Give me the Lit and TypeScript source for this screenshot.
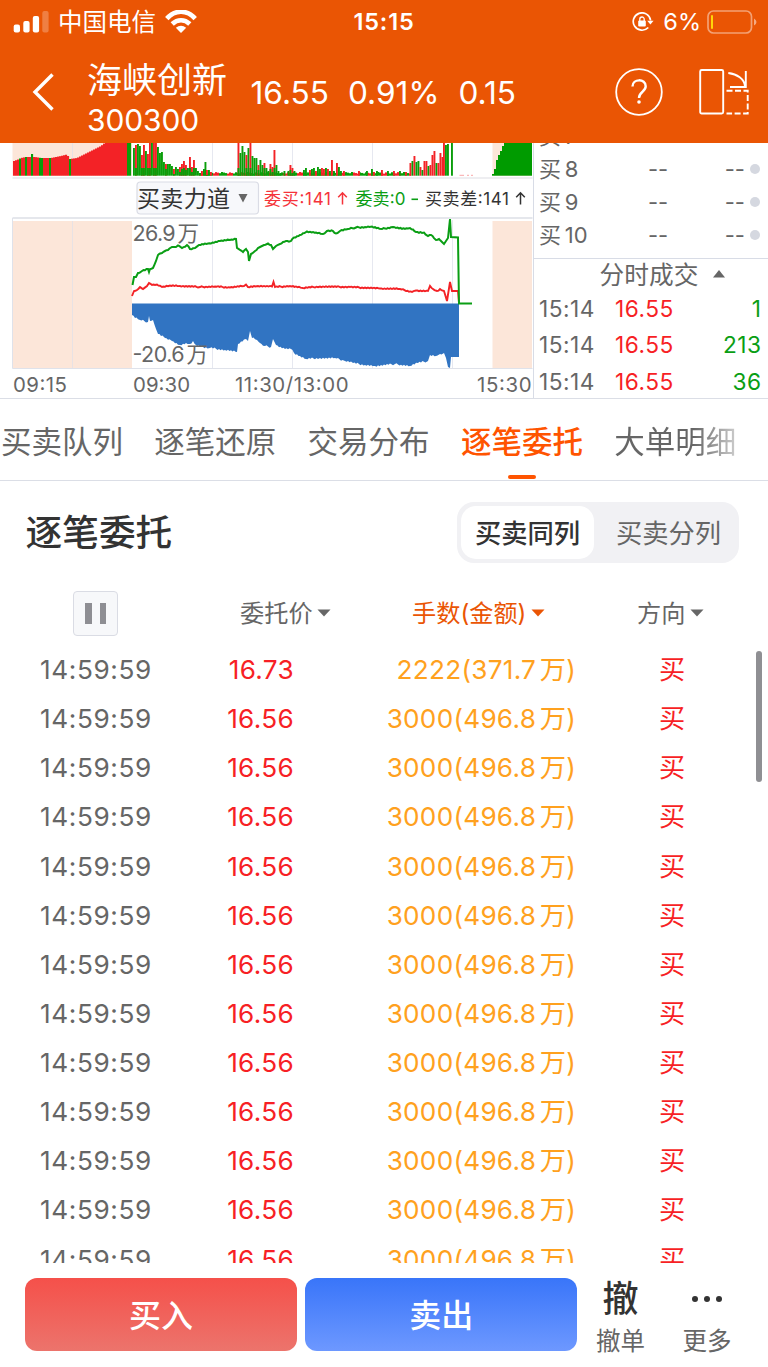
import { LitElement, html, svg, css } from "lit";
import { customElement } from "lit/decorators.js";

type Pt = [number, number];

const GREEN_LINE: Pt[] = [[132.5,285],[134,277],[136,277],[138,273],[142,271],[148,269],[149,272],[150,269],[153,268],[156,261],[158,255],[162,253],[165,251],[168,250],[172,247],[176,247],[178,245.5],[182,248],[187,245],[190,249],[195,248],[199,245],[208,243.5],[220,241],[230,240],[236,239],[237,248],[240,250],[243,252],[246,249],[248,252],[249,261],[251,254],[255,251],[258,248],[260,247],[264,245],[268,243.5],[271,245],[273,249],[276,246],[280,244],[286,241],[291,241],[294,237.5],[300,235],[307,231.5],[316,232.5],[323,234],[327,231],[333,231],[336,233.5],[340,231],[348,229],[356,227.5],[365,227],[372,226.5],[382,229],[393,227],[405,229],[410,228],[416,232],[424,232.5],[428,236],[431,235],[436,240],[439,239],[442,242],[444,244],[448,238],[450,219],[451,237],[458,237.5],[459,303.5],[472,303.5]];
const RED_LINE: Pt[] = [[132,296],[134,291],[137,290],[140,287],[143,289],[147,286],[149,283],[152,285],[157,284.5],[162,287],[170,285.5],[180,286],[200,287],[215,286.5],[230,287.5],[244,286],[246,284.5],[248,287],[258,286],[272,286.5],[273.5,282],[275,287],[290,286],[303,288],[320,286.5],[350,287],[380,288.5],[400,289],[412,292],[416,290.5],[428,291],[430,286],[433,289],[437,291],[440,289],[444,291],[447,301],[450,282],[452,291],[458,291],[459,303]];
const BLUE_EDGE: Pt[] = [[132,315],[135,318],[140,320],[148,322],[149,316],[150,321],[153,320],[156,329],[158,334],[165,338],[172,341],[180,345],[186,343],[190,344],[193,341],[197,346],[210,348],[225,350],[237,352],[238,344],[246,339],[248,341],[250,331],[252,338],[257,340],[260,343],[265,346],[271,347],[273,339],[276,345],[285,349],[291,349],[294,353],[300,356],[306,359],[320,358],[335,358],[345,361],[353,363],[365,365],[375,366],[395,364],[410,366],[418,363],[428,361],[430,355],[436,356],[440,354],[444,353],[446,358],[448,367],[450,368],[451,357],[459,357]];
const PRE_TOPS: Pt[] = [[13,161],[17,159.5],[20,158],[25,157],[34,157],[40,158],[50,158],[60,156],[66,154.5],[69,159],[76,158],[82,155],[88,152],[94,149],[100,146],[105,142]];
const VOL: [number, number, number][] = [
  [133,148,1],[135,145,0],[137,144,1],[139,146,1],[141,155,0],[143,145,0],[145,151,1],[147,154,0],[149,142,0],[151,142,1],[153,142,0],[155,142,0],[157,147,1],[159,153,1],[161,152,1],[163,162,1],[165,164,0],[167,164,1],[169,164,1],[171,166,1],[173,169,0],[175,167,1],[177,169,1],[179,167,0],[181,164,0],[183,161,0],[185,165,0],[187,168,1],[189,157,0],[191,167,0],[193,160,0],[195,168,1],[197,171,1],[199,173,1],[201,171,0],[203,169,1],[204.5,162,1],[206,170,0],[208,170,1],[210,172,0],
  [237.5,143,0],[239.5,153,1],[241.5,146,1],[243.5,152,1],[245.5,155,0],[247.5,148,1],[249.5,142,0],[251.5,156,1],[253.5,158,1],[255.5,158,1],[257.5,165,0],[259.5,160,1],[261.5,165,1],[263.5,163,0],[265.5,168,1],[267.5,171,1],[269.5,164,0],[271.5,167,0],[273.5,150,0],[275.5,165,1],[277.5,171,1],[279.5,173,1],[283.5,171,1],[287.5,171,1],[289.5,165,0],[291.5,168,0],[293.5,171,1],
  [303,170,1],[305,168,1],[309,170,0],[311,169,1],[313,168,1],[315,171,0],[317,167,1],[319,169,1],[321,168,0],[323,169,0],[325,168,1],[327,169,0],[329,171,1],[331,160,0],[333,171,1],[336,163,0],[338,167,1],[340,171,1],[343,171,0],[358,171,0],[366,171,1],[371,169,1],[373,172,0],[376,171,1],[381,170,0],[387,171,1],[393,171,0],[399,171,1],[405,172,0],
  [409.5,163,0],[411.5,161,1],[413.5,156,0],[415.5,162,1],[417.5,161,1],[419.5,167,0],[421.5,170,1],[423.5,161,0],[425.5,161,0],[427.5,166,1],[429.5,165,0],[431.5,155,0],[433.5,151,0],[435.5,163,1],[437.5,163,0],[439.5,153,0],[441.5,157,0],[443,142,0],[445,145,1],[447,144,1],[451,142,1],
];

const lerp = (pts: Pt[], x: number) => {
  for (let i = 1; i < pts.length; i++) {
    if (x <= pts[i][0]) {
      const [a, b] = [pts[i - 1], pts[i]];
      return a[1] + ((b[1] - a[1]) * (x - a[0])) / (b[0] - a[0] || 1);
    }
  }
  return pts[pts.length - 1][1];
};
const wobble = (i: number) => (((i * 7919) % 13) / 12 - 0.5);
const poly = (p: Pt[]) => p.map((q) => q.join(",")).join(" ");
const roughen = (pts: Pt[], amp: number, end: number): Pt[] => {
  const out: Pt[] = [];
  pts.forEach((p, i) => {
    out.push(p);
    const n = pts[i + 1];
    if (!n || n[0] > end) return;
    for (let x = p[0] + 1.5; x < n[0] - 1; x += 1.5) out.push([x, lerp(pts, x) + wobble(Math.round(x * 2)) * amp]);
  });
  return out;
};

const isPreGreen = (x: number) =>
  (x >= 18 && x < 21) || (x >= 24 && x < 26) || (x >= 31 && x < 33) || (x >= 38 && x < 43) || (x >= 48 && x < 50) || (x >= 68 && x < 70) || x >= 127;

@customElement("depth-chart")
export class DepthChart extends LitElement {
  static styles = css`
    :host { display: block; }
    svg { display: block; font-family: Inter, "Noto Sans CJK SC", sans-serif; }
    .axis { font-size: 20.4px; fill: #666; }
    .value { font-size: 21.5px; fill: #666; word-spacing: -3px; }
    .pick { font-size: 23px; fill: #333; }
    .note { font-size: 17px; }
  `;
  render() {
    const pre = [];
    for (let x = 13; x < 131; x += 2) {
      const y = x > 30.5 && x < 32.6 ? 154 : lerp(PRE_TOPS, x);
      pre.push(svg`<rect x=${x} y=${y} width="2.1" height=${175.7 - y} fill=${isPreGreen(x) ? "#0a9e0a" : "#f32226"} />`);
    }
    const low = [];
    for (let x = 199; x < 410; x += 2) {
      const y = 172.8 + wobble(x) * 1.6;
      low.push(svg`<rect x=${x} y=${y} width="2" height=${175.7 - y} fill=${(x * 31) % 7 < 3 ? "#f32226" : "#0a9e0a"} />`);
    }
    const after = [];
    for (let x = 492; x < 531; x += 2) {
      const y = lerp([[492,174],[494,169],[496,160],[498,155],[500,151],[502,146],[503,142]], x);
      after.push(svg`<rect x=${x} y=${y} width="2" height=${175.7 - y} fill="#009b00" />`);
    }
    const blue: Pt[] = [[132,303.5], ...roughen(BLUE_EDGE, 2, 446), [459,303.5]];
    const grid = [212.5, 292.5, 372.5, 452.5];
    return html`<svg width="533" height="255" viewBox="0 143 533 255">
      <rect x="12.5" y="143" width="119.5" height="33" fill="#fce6d9" />
      <rect x="492.5" y="143" width="39.5" height="33" fill="#fce6d9" />
      <rect x="12.5" y="221" width="119.5" height="147" fill="#fce6d9" />
      <rect x="492.5" y="221" width="39.5" height="147" fill="#fce6d9" />
      ${grid.map((x) => svg`<path d="M${x} 143V176M${x} 220V368" stroke="#e6e8f0" />`)}
      <path d="M72.5 143V160M72.5 221V368" stroke="#e8e2e4" />
      <path d="M12.5 178H532.5" stroke="#e8e8ec" stroke-width="1.5" />
      <path d="M12.5 218H532.5" stroke="#dddfe6" stroke-width="1.6" />
      <path d="M12.5 218V368.5H532.5" stroke="#dfe2ea" fill="none" />
      ${pre}${low}
      ${VOL.map(([x, y, g]) => svg`<rect x=${x} y=${y} width="1.9" height=${175.7 - y} fill=${g ? "#0a9e0a" : "#f32226"} />`)}
      ${VOL.filter((v) => v[0] < 300 && v[2] === 0).map(([x, y]) => svg`<rect x=${x} y=${Math.max(y + 5, 168)} width="1.9" height=${175.7 - Math.max(y + 5, 168)} fill="#0a9e0a" />`)}
      ${after}
      <path d="M459.5 175.3H464M467 175.3H469M471 175.3H473" stroke="#f9a7a8" />
      <polygon points=${poly(blue)} fill="#3174c2" />
      <polyline points=${poly(roughen(RED_LINE, 1.2, 446))} fill="none" stroke="#f32226" stroke-width="1.9" />
      <polyline points=${poly(roughen(GREEN_LINE, 1.2, 446))} fill="none" stroke="#0a9e14" stroke-width="2" />
      <rect x="137" y="182" width="121.5" height="32" rx="3.5" fill="#f7f8fb" stroke="#dadce5" stroke-width="1.2" />
      <text class="pick" x="137" y="206.5" textLength="93">买卖力道</text>
      <path d="M238.5 194H247.5L243 202.5Z" fill="#666" />
      <text class="note" x="264" y="204.5" textLength="67" fill="#f5333a">委买:141</text>
      <path d="M342.5 204.5V193M338.2 197.3L342.5 192.8L346.8 197.3" stroke="#f5333a" stroke-width="1.5" fill="none" />
      <text class="note" x="355.5" y="204.5" textLength="50" fill="#0a9e14">委卖:0</text>
      <path d="M411.5 199.3H418" stroke="#0a9e14" stroke-width="1.6" />
      <text class="note" x="425" y="204.5" textLength="84" fill="#333">买卖差:141</text>
      <path d="M520.5 204.5V193M516.2 197.3L520.5 192.8L524.8 197.3" stroke="#333" stroke-width="1.5" fill="none" />
      <text class="value" x="132.5" y="240.5" textLength="66.5">26.9 万</text>
      <text class="value" x="132.5" y="361.5" textLength="75.5">-20.6 万</text>
      <text class="axis" x="13" y="391.5" textLength="54">09:15</text>
      <text class="axis" x="133" y="391.5" textLength="57">09:30</text>
      <text class="axis" x="235" y="391.5" textLength="113.5">11:30/13:00</text>
      <text class="axis" x="477" y="391.5" textLength="54.5">15:30</text>
    </svg>`;
  }
}

@customElement("app-root")
export class AppRoot extends LitElement {
  static styles = css`
    :host { display: flex; flex-direction: column; width: 768px; height: 1367px; overflow: hidden; background: #fff; color: #666;
      font-family: Inter, "Noto Sans CJK SC", sans-serif; font-weight: 399; white-space: nowrap; }
    * { box-sizing: border-box; }
    svg { display: block; flex: none; }
    header { flex: none; height: 143px; background: #ea5504; color: #fff; }
    .status { display: grid; grid-template-columns: 1fr auto 1fr; height: 43px; align-items: center; }
    .carrier { display: flex; align-items: center; padding-left: 13px; font-size: 24.5px; line-height: 30px; }
    .carrier span { margin: 0 9px; }
    .clock { font-size: 23.5px; font-weight: 600; letter-spacing: 0.8px; }
    .power { display: flex; align-items: center; justify-content: flex-end; font-size: 23.5px; padding-right: 11px; }
    .power span { margin: 0 6px 0 9.5px; }
    .nav { display: flex; height: 98px; align-items: center; padding: 0 18px 0 32px; }
    .name { margin-left: 32px; width: 163.5px; display: flex; flex-direction: column; padding-top: 12px; }
    .title { font-size: 35px; line-height: 44px; }
    .code { font-size: 30px; line-height: 36px; letter-spacing: -0.1px; }
    .quote { display: flex; gap: 19px; font-size: 31.6px; flex: 1; }
    .help { margin-right: 36px; }
    .top { flex: none; display: grid; grid-template-columns: 533px 1fr; height: 256px; border-bottom: 1.5px solid #dbdee6; overflow: hidden; }
    .side { border-left: 1.5px solid #d8dce6; display: flex; flex-direction: column; overflow: hidden; }
    .book { height: 116px; flex: none; border-bottom: 1.5px solid #d8dce6; overflow: hidden; display: flex; flex-direction: column; justify-content: flex-end; padding-bottom: 6.5px; }
    .level { flex: none; height: 33px; line-height: 33px; display: grid; grid-template-columns: 105px 20px 1fr 11px; align-items: center; padding: 0 8px 0 5px; font-size: 22px; column-gap: 4px; word-spacing: -2.5px; }
    .level span:nth-child(3) { text-align: right; }
    .dot { width: 10px; height: 10px; border-radius: 50%; background: #d5d8e0; justify-self: end; }
    .deals { height: 31px; flex: none; display: flex; align-items: center; justify-content: center; gap: 15px; font-size: 24.7px; padding: 0 0 3px 23px; }
    .deals svg { margin-top: 2px; }
    .deal { height: 36.6px; flex: none; display: grid; grid-template-columns: 76px 80px 1fr; align-items: center; padding: 0 6.5px 0 5px; font-size: 22.7px; letter-spacing: 0.5px; }
    .red { color: #f71f25; } .green { color: #0a9e14; text-align: right; }
    .tabs { flex: none; display: flex; gap: 31.3px; height: 82px; border-bottom: 1.5px solid #dbdee6; padding-left: 1px; font-size: 30.5px; line-height: 86px; }
    .tab { position: relative; }
    .on { color: #ff5400; font-weight: 500; }
    .on::after { content: ""; position: absolute; left: 47px; bottom: 1px; width: 28px; height: 4px; border-radius: 2px; background: #ff5400; }
    .fade { background: linear-gradient(90deg, #666 65%, #ccc); -webkit-background-clip: text; background-clip: text; color: transparent; }
    .head { flex: none; display: flex; justify-content: space-between; height: 100px; padding: 20.5px 29px 0 25.5px; }
    h2 { margin: 0; color: #333; font-size: 36.7px; font-weight: 500; line-height: 62px; }
    .switch { width: 282px; height: 61px; border-radius: 17px; background: #f1f1f4; padding: 4px; display: grid; grid-template-columns: 133px 1fr; font-size: 26.3px; line-height: 56px; text-align: center; }
    .switch span:last-child { padding-left: 8px; }
    .sel { background: #fff; border-radius: 15px; color: #333; font-weight: 500; height: 53px; }
    .cols { flex: none; height: 64px; display: grid; grid-template-columns: 208px 172px 225px 1fr; align-items: center; padding-left: 32px; font-size: 24.2px; }
    .col { display: flex; align-items: center; gap: 4.5px; line-height: 30px; padding-top: 1px; }
    .col svg { margin-top: -1px; }
    .pause { width: 45px; height: 45px; margin-left: 41px; border: 1.5px solid #dadce4; border-radius: 4px; background: #f7f8fa; display: flex; align-items: center; justify-content: center; gap: 8px; }
    .pause i { width: 6.5px; height: 21px; background: #8e8e93; }
    .hot { color: #ea5504; }
    .body { flex: none; height: 618px; overflow: hidden; display: flex; position: relative; }
    .rows { flex: 1; }
    .row { height: 49.13px; display: grid; grid-template-columns: 139px 115px 282px 1fr; align-items: center; padding: 0 0 0 40px; font-size: 26.2px; line-height: 49px; }
    .row span:nth-child(1) { letter-spacing: 0.6px; }
    .row span:nth-child(2) { letter-spacing: 0.3px; }
    .row span:nth-child(2), .row span:nth-child(3) { text-align: right; }
    .amount { color: #ffa11e; word-spacing: -4px; letter-spacing: 0.25px; }
    .row .side-cell { padding-left: 83px; }
    .thumb { position: absolute; right: 6px; top: 6px; width: 6px; height: 131px; border-radius: 3px; background: #8f8f93; }
    footer { flex: none; display: flex; padding: 14.5px 0 0 25px; }
    .btn { width: 272px; height: 73.5px; margin-right: 8.3px; border-radius: 12px; color: #fff; font-weight: 500; font-size: 32px; line-height: 76px; text-align: center; }
    .buy { background: linear-gradient(#f5504a, #ec746c); }
    .sell { background: linear-gradient(#3975f9, #6d98ff); margin-right: 0; }
    .act { width: 86.5px; text-align: center; display: flex; flex-direction: column; align-items: center; font-size: 24.5px; line-height: 40px; }
    .big { height: 43.5px; color: #333; font-size: 36px; font-weight: 500; line-height: 44px; display: flex; align-items: center; }
  `;

  caret(color: string) {
    return html`<svg width="14" height="8" viewBox="0 0 14 8"><path d="M.5.5H13.5L7 7.5Z" fill=${color} /></svg>`;
  }

  render() {
    const rows = Array.from({ length: 13 }, (_, i) => (i ? ["16.56", "3000(496.8 万)"] : ["16.73", "2222(371.7 万)"]));
    return html`
      <header>
        <div class="status">
          <div class="carrier">
            <svg width="36" height="22" viewBox="0 0 36 22" fill="#fff"><rect x=".7" y="13.5" width="6.3" height="8" rx="2" /><rect x="10.3" y="10" width="6.3" height="11.5" rx="2" /><rect x="19.8" y="5" width="6.3" height="16.5" rx="2" /><rect x="29.3" y="0" width="6.3" height="21.5" rx="2" opacity=".25" /></svg>
            <span>中国电信</span>
            <svg width="32" height="24" viewBox="0 0 32 24" fill="none" stroke="#fff" stroke-width="4.6"><path d="M1.8 8.6C10-.6 22-.6 30.2 8.6M7.2 14C12.5 8.9 19.5 8.9 24.8 14" /><path d="M10.8 17.7Q16 13.6 21.2 17.7L16 23Z" fill="#fff" stroke="none" /></svg>
          </div>
          <div class="clock">15:15</div>
          <div class="power">
            <svg width="22" height="20" viewBox="0 0 22 20" fill="none" stroke="#fff" stroke-width="1.7"><path d="M16.3 15.5A8.7 8.7 0 1 1 18.6 8.5" /><path d="M15.2 8.8H21.6L18.4 12.6Z" fill="#fff" stroke="none" /><rect x="6.2" y="8.6" width="7.6" height="6" rx="1" fill="#fff" stroke="none" /><path d="M7.8 9V7.2a2.2 2.2 0 0 1 4.4 0V9" stroke-width="1.3" /></svg>
            <span>6%</span>
            <svg width="50" height="24" viewBox="0 0 50 24"><rect x="1" y="1" width="43.5" height="22" rx="5.5" fill="none" stroke="#fff" stroke-opacity=".45" stroke-width="1.7" /><path d="M47 8.5Q49.5 10 49.5 12T47 15.5Z" fill="#fff" opacity=".5" /><rect x="4" y="5" width="2" height="14" rx="1" fill="#ffd60a" /></svg>
          </div>
        </div>
        <div class="nav">
          <svg width="23" height="38" viewBox="0 0 23 38"><path d="M20.5 1.5L3 19L20.5 36.5" fill="none" stroke="#fff" stroke-width="3.4" /></svg>
          <div class="name"><div class="title">海峡创新</div><div class="code">300300</div></div>
          <div class="quote"><span>16.55</span><span>0.91%</span><span>0.15</span></div>
          <svg class="help" width="48" height="48" viewBox="0 0 48 48" fill="none" stroke="#fff"><circle cx="24" cy="24" r="22.8" stroke-width="1.8" /><path d="M17.5 18.5C17.5 10.3 30.7 10.3 30.7 18.3C30.7 24 24 23.5 24 30" stroke-width="2.4" /><circle cx="24" cy="34" r="1.8" fill="#fff" stroke="none" /></svg>
          <svg width="51" height="48" viewBox="0 0 51 48" fill="none" stroke="#fff" stroke-width="1.9"><rect x="1.2" y="2" width="23" height="43.5" rx="1.5" /><path d="M29.3 5C38 6 45.500 11 46 18.500M46.800 3V19H31" /><path d="M27.500 22.800H48.700V45.500H27.500" stroke-dasharray="6 2.500" /></svg>
        </div>
      </header>
      <section class="top">
        <depth-chart></depth-chart>
        <div class="side">
          <div class="book">
            ${[7, 8, 9, 10].map((n) => html`<div class="level"><span>买 ${n}</span><span>--</span><span>--</span><i class="dot"></i></div>`)}
          </div>
          <div class="deals">分时成交<svg width="12" height="8" viewBox="0 0 12 8"><path d="M6 0L12 7.500H0Z" fill="#666" /></svg></div>
          ${[1, 213, 36].map((n) => html`<div class="deal"><span>15:14</span><span class="red">16.55</span><span class="green">${n}</span></div>`)}
        </div>
      </section>
      <nav class="tabs">
        <span class="tab">买卖队列</span><span class="tab">逐笔还原</span><span class="tab">交易分布</span><span class="tab on">逐笔委托</span><span class="tab fade">大单明细</span>
      </nav>
      <section class="head">
        <h2>逐笔委托</h2>
        <div class="switch"><span class="sel">买卖同列</span><span>买卖分列</span></div>
      </section>
      <div class="cols">
        <div class="pause"><i></i><i></i></div>
        <div class="col">委托价${this.caret("#666")}</div>
        <div class="col hot">手数(金额)${this.caret("#ea5504")}</div>
        <div class="col">方向${this.caret("#666")}</div>
      </div>
      <div class="body">
        <div class="rows">
          ${rows.map(([p, a]) => html`<div class="row"><span>14:59:59</span><span class="red">${p}</span><span class="amount">${a}</span><span class="red side-cell">买</span></div>`)}
        </div>
        <div class="thumb"></div>
      </div>
      <footer>
        <div class="btn buy">买入</div>
        <div class="btn sell">卖出</div>
        <div class="act"><div class="big">撤</div>撤单</div>
        <div class="act"><div class="big"><svg width="32" height="8" viewBox="0 0 32 8" fill="#333"><circle cx="4" cy="4" r="3" /><circle cx="16" cy="4" r="3" /><circle cx="28" cy="4" r="3" /></svg></div>更多</div>
      </footer>
    `;
  }
}
